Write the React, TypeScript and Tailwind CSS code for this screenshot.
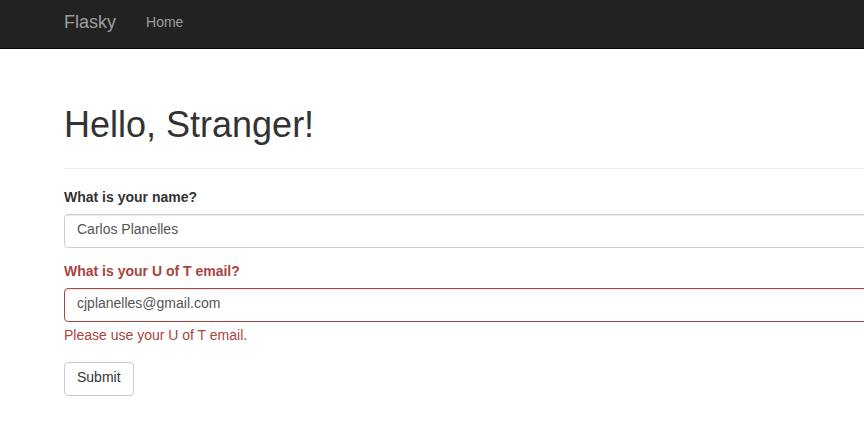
import { useState } from "react";

const fieldBase =
  "block h-[34px] w-full rounded border bg-white px-3 pt-1 pb-2 text-sm text-[#555555] outline-none shadow-[inset_0_1px_1px_rgba(0,0,0,0.075)]";

export default function App() {
  const [name, setName] = useState("Carlos Planelles");
  const [email, setEmail] = useState("cjplanelles@gmail.com");

  return (
    <div className="overflow-x-hidden bg-white font-['Helvetica_Neue',Helvetica,'Liberation_Sans',Arial,sans-serif] text-sm text-[#333333]">
      <nav className="flex h-[49px] border-b border-[#080808] bg-[#222222] pl-16 text-[#9d9d9d]">
        <a href="#" className="pt-3 text-lg leading-5">
          Flasky
        </a>
        <a href="#" className="ml-[30px] pt-3 leading-5">
          Home
        </a>
      </nav>

      <main className="-mr-4 pl-16">
        <header className="border-b border-[#eeeeee] pt-[56px] pb-[23px]">
          <h1 className="text-4xl leading-10 font-medium">Hello, Stranger!</h1>
        </header>

        <form className="pt-[18px]" onSubmit={(event) => event.preventDefault()}>
          <label htmlFor="name" className="mb-[7px] block leading-5 font-bold">
            What is your name?
          </label>
          <input
            id="name"
            type="text"
            value={name}
            onChange={(event) => setName(event.target.value)}
            className={`${fieldBase} border-[#cccccc]`}
          />

          <div className="mt-[13px] text-[#a94442]">
            <label htmlFor="email" className="mb-[7px] block leading-5 font-bold">
              What is your U of T email?
            </label>
            <input
              id="email"
              type="text"
              value={email}
              onChange={(event) => setEmail(event.target.value)}
              aria-invalid="true"
              aria-describedby="email-error"
              className={`${fieldBase} border-[#a94442]`}
            />
            <p id="email-error" className="mt-[3px] leading-5">
              Please use your U of T email.
            </p>
          </div>

          <button
            type="submit"
            className="mt-[17px] h-[34px] rounded border border-[#cccccc] bg-white px-3 pb-1 leading-5"
          >
            Submit
          </button>
        </form>
      </main>
    </div>
  );
}
